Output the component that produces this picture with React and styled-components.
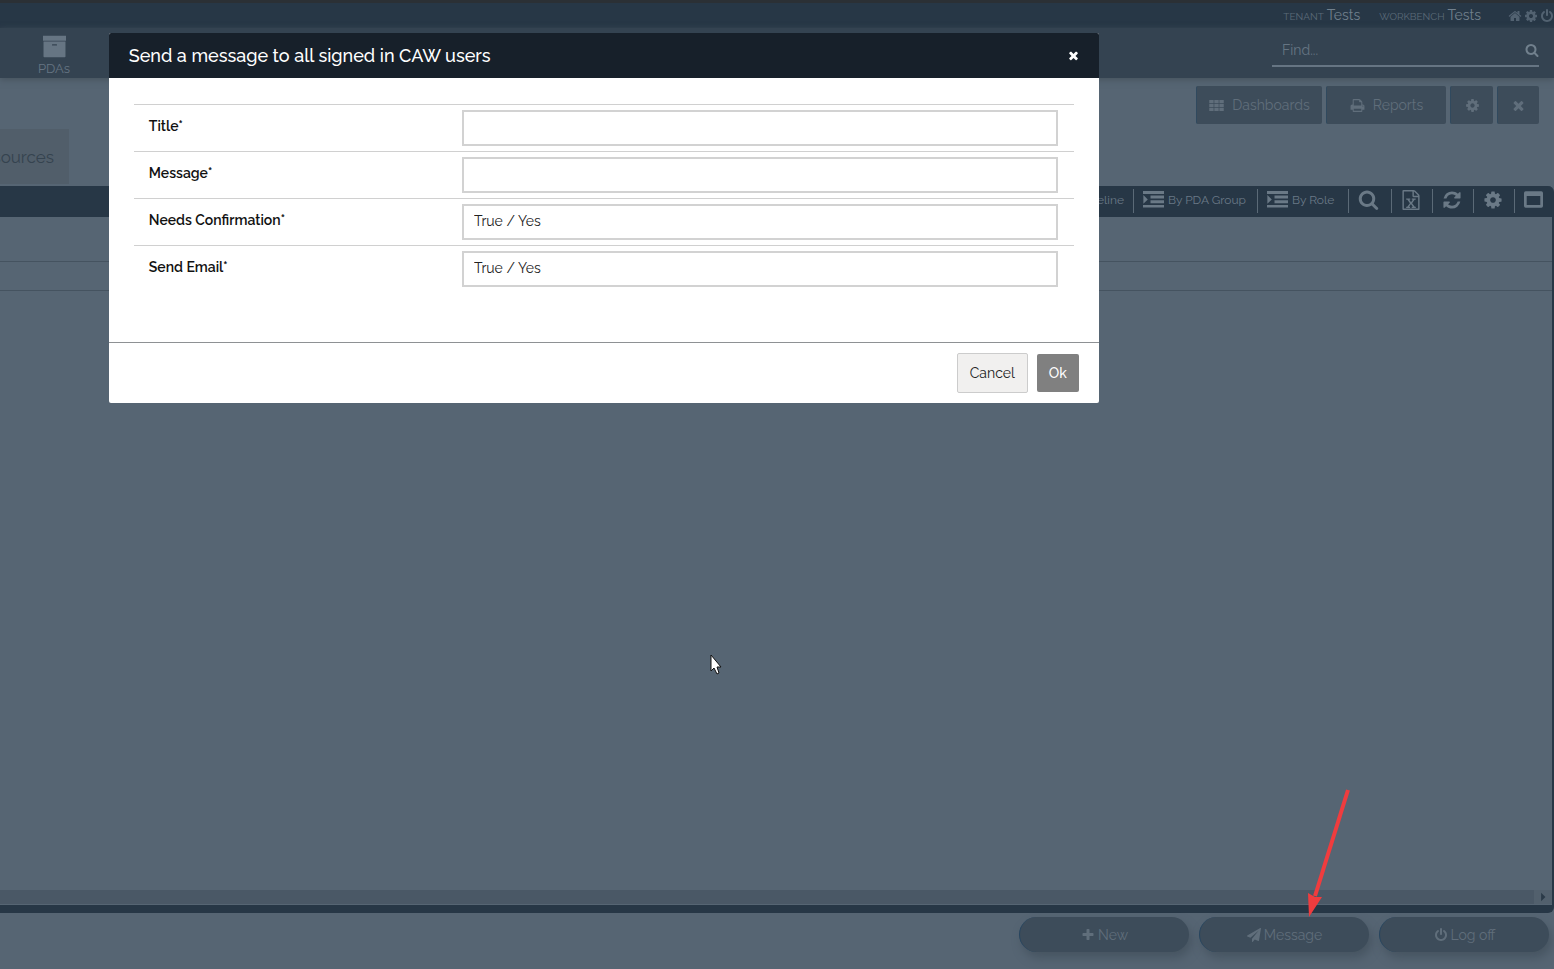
import React, { useState } from 'react';
import styled, { createGlobalStyle } from 'styled-components';

const GlobalStyle = createGlobalStyle`
  * {
    box-sizing: border-box;
  }
  body {
    margin: 0;
    background: #566573;
    font-family: Raleway, Lato, sans-serif;
    font-size: 14px;
    color: #71808d;
  }
  button, input, select {
    font-family: inherit;
    margin: 0;
  }
  button {
    cursor: pointer;
  }
`

const glyphs = {
  search: 'M1216 832q0-185-131.5-316.5t-316.5-131.5-316.5 131.5-131.5 316.5 131.5 316.5 316.5 131.5 316.5-131.5 131.5-316.5zm512 832q0 52-38 90t-90 38q-54 0-90-38l-343-342q-179 124-399 124-143 0-273.5-55.5t-225-150-150-225-55.5-273.5 55.5-273.5 150-225 225-150 273.5-55.5 273.5 55.5 225 150 150 225 55.5 273.5q0 220-124 399l343 343q37 37 37 90z',
  close: 'M1490 1322q0 40-28 68l-136 136q-28 28-68 28t-68-28l-294-294-294 294q-28 28-68 28t-68-28l-136-136q-28-28-28-68t28-68l294-294-294-294q-28-28-28-68t28-68l136-136q28-28 68-28t68 28l294 294 294-294q28-28 68-28t68 28l136 136q28 28 28 68t-28 68l-294 294 294 294q28 28 28 68z',
  cog: 'M1152 896q0-106-75-181t-181-75-181 75-75 181 75 181 181 75 181-75 75-181zm512-109v222q0 12-8 23t-20 13l-185 28q-19 54-39 91 35 50 107 138 10 12 10 25t-9 23q-27 37-99 108t-94 71q-12 0-26-9l-138-108q-44 23-91 38-16 136-29 186-7 28-36 28h-222q-14 0-24.5-8.5t-11.5-21.5l-28-184q-49-16-90-37l-141 107q-10 9-25 9-14 0-25-11-126-114-165-168-7-10-7-23 0-12 8-23 15-21 51-66.5t54-70.5q-27-50-41-99l-183-27q-13-2-21-12.5t-8-23.5v-222q0-12 8-23t19-13l186-28q14-46 39-92-40-57-107-138-10-12-10-24 0-10 9-23 26-36 98.5-107.5t94.5-71.5q13 0 26 10l138 107q44-23 91-38 16-136 29-186 7-28 36-28h222q14 0 24.5 8.5t11.5 21.5l28 184q49 16 90 37l142-107q9-9 24-9 13 0 25 10 129 119 165 170 7 8 7 22 0 12-8 23-15 21-51 66.5t-54 70.5q26 50 41 98l183 28q13 2 21 12.5t8 23.5z',
  power: 'M1664 896q0 156-61 298t-164 245-245 164-298 61-298-61-245-164-164-245-61-298q0-182 80.5-343t226.5-270q43-32 95.5-25t83.5 50q32 42 24.5 94.5t-49.5 84.5q-98 74-151.5 181t-53.5 228q0 104 40.5 198.5t109.5 163.5 163.5 109.5 198.5 40.5 198.5-40.5 163.5-109.5 109.5-163.5 40.5-198.5q0-121-53.5-228t-151.5-181q-42-32-49.5-84.5t24.5-94.5q31-43 84-50t95 25q146 109 226.5 270t80.5 343zm-640-768v640q0 52-38 90t-90 38-90-38-38-90v-640q0-52 38-90t90-38 90 38 38 90z',
  plus: 'M1600 736v192q0 40-28 68t-68 28h-416v416q0 40-28 68t-68 28h-192q-40 0-68-28t-28-68v-416h-416q-40 0-68-28t-28-68v-192q0-40 28-68t68-28h416v-416q0-40 28-68t68-28h192q40 0 68 28t28 68v416h416q40 0 68 28t28 68z',
  plane: 'M1764 11q33 24 27 64l-256 1536q-5 29-32 45-14 8-31 8-11 0-24-5l-453-185-242 295q-18 23-49 23-13 0-22-4-19-7-30.5-23.5t-11.5-36.5v-349l864-1059-1069 925-395-162q-37-14-40-55-2-40 32-59l1664-960q15-9 32-9 20 0 36 11z',
  home: 'M1472 992v480q0 26-19 45t-45 19h-384v-384h-256v384h-384q-26 0-45-19t-19-45v-480q0-1 .5-3t.5-3l575-474 575 474q1 2 1 6zm223-69l-62 74q-8 9-21 11h-3q-13 0-21-7l-692-577-692 577q-12 8-24 7-13-2-21-11l-62-74q-8-10-7-23.5t11-21.5l719-599q32-26 76-26t76 26l244 204v-195q0-14 9-23t23-9h192q14 0 23 9t9 23v408l219 182q10 8 11 21.5t-7 23.5z',
  refresh: 'M1639 1056q0 5-1 7-64 268-268 434.5t-478 166.5q-146 0-282.5-55t-243.5-157l-129 129q-19 19-45 19t-45-19-19-45v-448q0-26 19-45t45-19h448q26 0 45 19t19 45-19 45l-137 137q71 66 161 102t187 36q134 0 250-65t186-179q11-17 53-117 8-23 30-23h192q13 0 22.5 9.5t9.5 22.5zm25-800v448q0 26-19 45t-45 19h-448q-26 0-45-19t-19-45 19-45l138-138q-148-137-349-137-134 0-250 65t-186 179q-11 17-53 117-8 23-30 23h-199q-13 0-22.5-9.5t-9.5-22.5v-7q65-268 270-434.5t480-166.5q146 0 284 55.5t245 156.5l130-129q19-19 45-19t45 19 19 45z',
  print: 'M448 1536h896v-256h-896v256zm0-640h896v-384h-160q-40 0-68-28t-28-68v-160h-640v640zm1152 64q0-26-19-45t-45-19-45 19-19 45 19 45 45 19 45-19 19-45zm128 0v416q0 13-9.5 22.5t-22.5 9.5h-224v160q0 40-28 68t-68 28h-960q-40 0-68-28t-28-68v-160h-224q-13 0-22.5-9.5t-9.5-22.5v-416q0-79 56.5-135.5t135.5-56.5h64v-544q0-40 28-68t68-28h672q40 0 88 20t76 48l152 152q28 28 48 76t20 88v256h64q79 0 135.5 56.5t56.5 135.5z',
  th: 'M30 250h520v370h-520zM636 250h520v370h-520zM1242 250h520v370h-520zM30 710h520v370h-520zM636 710h520v370h-520zM1242 710h520v370h-520zM30 1170h520v370h-520zM636 1170h520v370h-520zM1242 1170h520v370h-520z',
  archive: 'M0 60h1792v390h-1792zM40 500h1712v1170q0 60-60 60h-1592q-60 0-60-60zM740 730q-45 0-45 45t45 45h312q45 0 45-45t-45-45z',
  indent: 'M0 160h1792v260h-1792zM640 560h1152v260h-1152zM640 960h1152v260h-1152zM0 1360h1792v220h-1792zM30 520l380 370-380 370z',
  excel: 'M1596 380q28 28 48 76t20 88v1152q0 40-28 68t-68 28h-1344q-40 0-68-28t-28-68v-1600q0-40 28-68t68-28h896q40 0 88 20t76 48zm-444-244v376h376q-10-29-22-41l-313-313q-12-12-41-22zm384 1528v-1024h-416q-40 0-68-28t-28-68v-416h-768v1536h1280zM460 768h370v108h-90l160 225 160-225h-95v-108h350v108h-95l-225 300 240 320h95v108h-370v-108h100l-170-240-170 240h95v108h-350v-108h95l240-320-225-300h-100z',
  window: 'M160 128h1472q160 0 160 160v1216q0 160-160 160h-1472q-160 0-160-160v-1216q0-160 160-160zM256 560v850h1280v-850z',
  caret: 'M560 156l772 740-772 740z',
}

const Svg = styled.svg`
  width: ${p => p.$size}px;
  height: ${p => p.$size}px;
  flex: none;
  fill: currentColor;
  fill-rule: evenodd;
`
const Icon = ({ name, size = 15 }) => (
  <Svg $size={size} viewBox="0 0 1792 1792" aria-hidden="true">
    <path d={glyphs[name]} />
  </Svg>
)

const Page = styled.div`
  min-height: 100vh;
  display: flex;
  flex-direction: column;
  overflow: hidden;
`
const TopBar = styled.div`
  height: 28px;
  border-top: 3px solid #2b3035;
  background: #273746;
  display: flex;
  align-items: center;
  justify-content: flex-end;
  gap: 19px;
`
const Place = styled.span`
  font-size: 14px;
  line-height: 24px;
`
const PlaceKind = styled.small`
  font-size: 10px;
  color: #5c6b79;
  margin-right: 3px;
`
const TopLinks = styled.nav`
  display: flex;
  gap: 2px;
  margin-left: 8px;
  color: #526271;
`
const TopLink = styled.a`
  display: flex;
  color: inherit;
`
const Header = styled.header`
  height: 50px;
  background: #344351;
  display: flex;
  justify-content: space-between;
  padding: 0 15px 0 38px;
  box-shadow: 0 2px 6px #47545f;
`
const NavLink = styled.a`
  display: flex;
  flex-direction: column;
  align-items: center;
  padding-top: 7px;
  font-size: 13px;
  line-height: 22px;
  color: #667583;
  text-decoration: none;
`
const SearchBox = styled.form`
  width: 267px;
  height: 39px;
  padding: 6px 0 0 10px;
  border-bottom: 2px solid #667583;
  display: flex;
  align-items: center;
`
const SearchInput = styled.input`
  flex: 1;
  min-width: 0;
  padding: 0;
  border: 0;
  outline: 0;
  background: none;
  font-size: 14px;
  color: #667583;
  &::placeholder {
    color: #667583;
  }
`
const IconButton = styled.button`
  display: flex;
  padding: 0;
  border: 0;
  background: none;
  color: inherit;
`
const Actions = styled.div`
  height: 108px;
  display: flex;
  justify-content: space-between;
  align-items: flex-start;
  padding: 8px 15px 2px 0;
`
const Tabs = styled.nav`
  align-self: flex-end;
  width: 69px;
  height: 55px;
  background: #515e6a;
  display: flex;
  align-items: center;
  justify-content: flex-end;
  padding-right: 15px;
`
const Tab = styled.a`
  font-size: 17px;
  color: #35434f;
  text-decoration: none;
`
const ButtonGroup = styled.div`
  display: flex;
  gap: 4px;
`
const ActionButton = styled.button`
  width: ${p => p.$width}px;
  height: 38px;
  padding: 0;
  border: 0;
  border-left: 1px solid #30495e;
  border-radius: 2px;
  background: #3d4c5a;
  color: #606e7b;
  font-size: 14px;
  display: flex;
  align-items: center;
  justify-content: center;
  gap: 8px;
`
const Panel = styled.main`
  flex: 1;
  display: flex;
  flex-direction: column;
  border-right: 2px solid #273746;
  border-bottom: 8px solid #273746;
  border-radius: 0 6px 6px 0;
`
const Toolbar = styled.div`
  height: 31px;
  background: #273746;
  border-top-right-radius: 4px;
  display: flex;
  justify-content: flex-end;
  padding-top: 3px;
`
const Tool = styled.button`
  width: ${p => p.$width}px;
  height: 24px;
  padding: 0 0 3px 9px;
  border: 0;
  border-left: 1px solid #5b6a77;
  background: none;
  color: #6a7986;
  font-size: 12px;
  white-space: nowrap;
  display: flex;
  align-items: center;
  gap: 4px;
`
const GridLine = styled.div`
  height: ${p => p.$height}px;
  border-bottom: 1px solid #455360;
`
const GridBody = styled.div`
  flex: 1;
`
const ScrollBar = styled.div`
  height: 15px;
  border-bottom: 1px solid #566573;
  display: flex;
  justify-content: flex-end;
  background: #4a5866;
`
const ScrollButton = styled.button`
  width: 18px;
  padding: 0;
  border: 0;
  background: #52606d;
  color: #2b3a48;
  display: flex;
  align-items: center;
  justify-content: center;
`
const Footer = styled.footer`
  height: 56px;
  padding: 4px 5px;
  display: flex;
  justify-content: flex-end;
  gap: 10px;
`
const FooterItem = styled.div`
  position: relative;
`
const PillButton = styled.button`
  width: 170px;
  height: 35px;
  padding: 0;
  border: 0;
  border-left: 1px solid #27455f;
  border-radius: 18px;
  background: #3d4c5a;
  box-shadow: 3px 6px 10px #475562;
  color: #606e7b;
  font-size: 14px;
  display: flex;
  align-items: center;
  justify-content: center;
  gap: 3px;
`
const Arrow = styled.svg`
  position: absolute;
  right: 15px;
  bottom: 48px;
  width: 50px;
  height: 130px;
  pointer-events: none;
`
const Cursor = styled.svg`
  position: fixed;
  left: 710px;
  top: 654px;
  width: 12px;
  height: 21px;
  pointer-events: none;
`
const Dialog = styled.form`
  position: fixed;
  top: 33px;
  left: 7%;
  width: 100%;
  max-width: 990px;
  border-radius: 2px;
  overflow: hidden;
  background: #fff;
  color: #111;
`
const DialogHeader = styled.div`
  height: 45px;
  padding: 0 19px 0 20px;
  background: #17202a;
  color: #fff;
  display: flex;
  align-items: center;
  justify-content: space-between;
`
const DialogTitle = styled.h1`
  margin: 0;
  font-size: 18px;
  font-weight: 500;
`
const DialogBody = styled.div`
  padding: 26px 25px 50px;
`
const Row = styled.div`
  display: grid;
  grid-template-columns: 1fr 2fr;
  height: 47px;
  padding: 5px 0;
  border-top: 1px solid #d0d0d0;
`
const Label = styled.label`
  padding: 6px 15px;
  font-size: 14px;
  line-height: 20px;
  font-weight: 600;
`
const Field = styled.div`
  padding: 0 16px 0 15px;
`
const Input = styled.input`
  width: 100%;
  height: 36px;
  padding: 0 10px 2px;
  border: 2px solid #d2d2d2;
  border-radius: 0;
  background: #fff;
  font-size: 14px;
  color: #222;
  appearance: none;
`
const DialogFooter = styled.div`
  height: 61px;
  padding: 0 20px;
  border-top: 1px solid #8e9194;
  display: flex;
  align-items: center;
  justify-content: flex-end;
  gap: 9px;
`
const DialogButton = styled.button`
  height: ${p => p.$primary ? 38 : 40}px;
  width: ${p => p.$primary ? 42 : 71}px;
  padding: 0;
  border: ${p => p.$primary ? '0' : '1px solid #ccc'};
  border-radius: 2px;
  background: ${p => p.$primary ? '#808080' : '#f1f0ef'};
  color: ${p => p.$primary ? '#fff' : '#222'};
  font-size: 14px;
  font-weight: ${p => p.$primary ? 500 : 400};
`

const fields = [
  { id: 'title', label: 'Title*' },
  { id: 'message', label: 'Message*' },
  { id: 'confirm', label: 'Needs Confirmation*', select: true },
  { id: 'email', label: 'Send Email*', select: true },
]

const MessageDialog = () => {
  const [values, setValues] = useState({ title: '', message: '', confirm: 'True / Yes', email: 'True / Yes' })

  const handleChange = event => {
    const { name, value } = event.target;
    setValues(prev => ({ ...prev, [name]: value }))
  }

  return (
    <Dialog role="dialog" aria-labelledby="dialog-title" onSubmit={e => e.preventDefault()}>
      <DialogHeader>
        <DialogTitle id="dialog-title">Send a message to all signed in CAW users</DialogTitle>
        <IconButton type="button" aria-label="Close"><Icon name="close" size={13} /></IconButton>
      </DialogHeader>
      <DialogBody>
        {fields.map(({ id, label, select }) => (
          <Row key={id}>
            <Label htmlFor={id}>{label}</Label>
            <Field>
              {select ? (
                <Input as="select" id={id} name={id} value={values[id]} onChange={handleChange}>
                  <option>True / Yes</option>
                  <option>False / No</option>
                </Input>
              ) : (
                <Input id={id} name={id} type="text" value={values[id]} onChange={handleChange} />
              )}
            </Field>
          </Row>
        ))}
      </DialogBody>
      <DialogFooter>
        <DialogButton type="button">Cancel</DialogButton>
        <DialogButton type="submit" $primary>Ok</DialogButton>
      </DialogFooter>
    </Dialog>
  )
}

export default function App() {
  return (
    <Page>
      <GlobalStyle />
      <TopBar>
        <Place><PlaceKind>TENANT</PlaceKind>Tests</Place>
        <Place><PlaceKind>WORKBENCH</PlaceKind>Tests</Place>
        <TopLinks>
          <TopLink href="#home" aria-label="Home"><Icon name="home" size={14} /></TopLink>
          <TopLink href="#settings" aria-label="Settings"><Icon name="cog" size={14} /></TopLink>
          <TopLink href="#logout" aria-label="Log out"><Icon name="power" size={14} /></TopLink>
        </TopLinks>
      </TopBar>
      <Header>
        <NavLink href="#pdas"><Icon name="archive" size={23} />PDAs</NavLink>
        <SearchBox role="search">
          <SearchInput type="text" aria-label="Find" placeholder="Find..." />
          <IconButton type="button" aria-label="Search"><Icon name="search" size={14} /></IconButton>
        </SearchBox>
      </Header>
      <Actions>
        <Tabs><Tab href="#resources">Resources</Tab></Tabs>
        <ButtonGroup>
          <ActionButton $width={126}><Icon name="th" />Dashboards</ActionButton>
          <ActionButton $width={120}><Icon name="print" />Reports</ActionButton>
          <ActionButton $width={43} aria-label="Settings"><Icon name="cog" /></ActionButton>
          <ActionButton $width={42} aria-label="Close"><Icon name="close" /></ActionButton>
        </ButtonGroup>
      </Actions>
      <Panel>
        <Toolbar>
          <Tool $width={92}><Icon name="indent" size={21} />Timeline</Tool>
          <Tool $width={124}><Icon name="indent" size={21} />By PDA Group</Tool>
          <Tool $width={91}><Icon name="indent" size={21} />By Role</Tool>
          <Tool $width={43} aria-label="Search"><Icon name="search" size={21} /></Tool>
          <Tool $width={41} aria-label="Export to Excel"><Icon name="excel" size={20} /></Tool>
          <Tool $width={41} aria-label="Refresh"><Icon name="refresh" size={20} /></Tool>
          <Tool $width={41} aria-label="Settings"><Icon name="cog" size={20} /></Tool>
          <Tool $width={38} aria-label="Maximize"><Icon name="window" size={19} /></Tool>
        </Toolbar>
        <GridLine $height={45} />
        <GridLine $height={29} />
        <GridBody />
        <ScrollBar>
          <ScrollButton aria-label="Scroll right"><Icon name="caret" size={10} /></ScrollButton>
        </ScrollBar>
      </Panel>
      <Footer>
        <FooterItem><PillButton><Icon name="plus" size={14} />New</PillButton></FooterItem>
        <FooterItem>
          <PillButton><Icon name="plane" size={14} />Message</PillButton>
          <Arrow viewBox="0 0 50 130" aria-hidden="true">
            <path d="M44 3L11 109" stroke="#f03c3e" strokeWidth="4" fill="none" />
            <path d="M5 130L4 106L11 110L18 110Z" fill="#f03c3e" />
          </Arrow>
        </FooterItem>
        <FooterItem><PillButton><Icon name="power" size={14} />Log off</PillButton></FooterItem>
      </Footer>
      <MessageDialog />
      <Cursor viewBox="0 0 12 21" aria-hidden="true">
        <path d="M1 1V17L4 14L7 20L9 19L7 13H11Z" fill="#fff" stroke="#111" />
      </Cursor>
    </Page>
  )
}
